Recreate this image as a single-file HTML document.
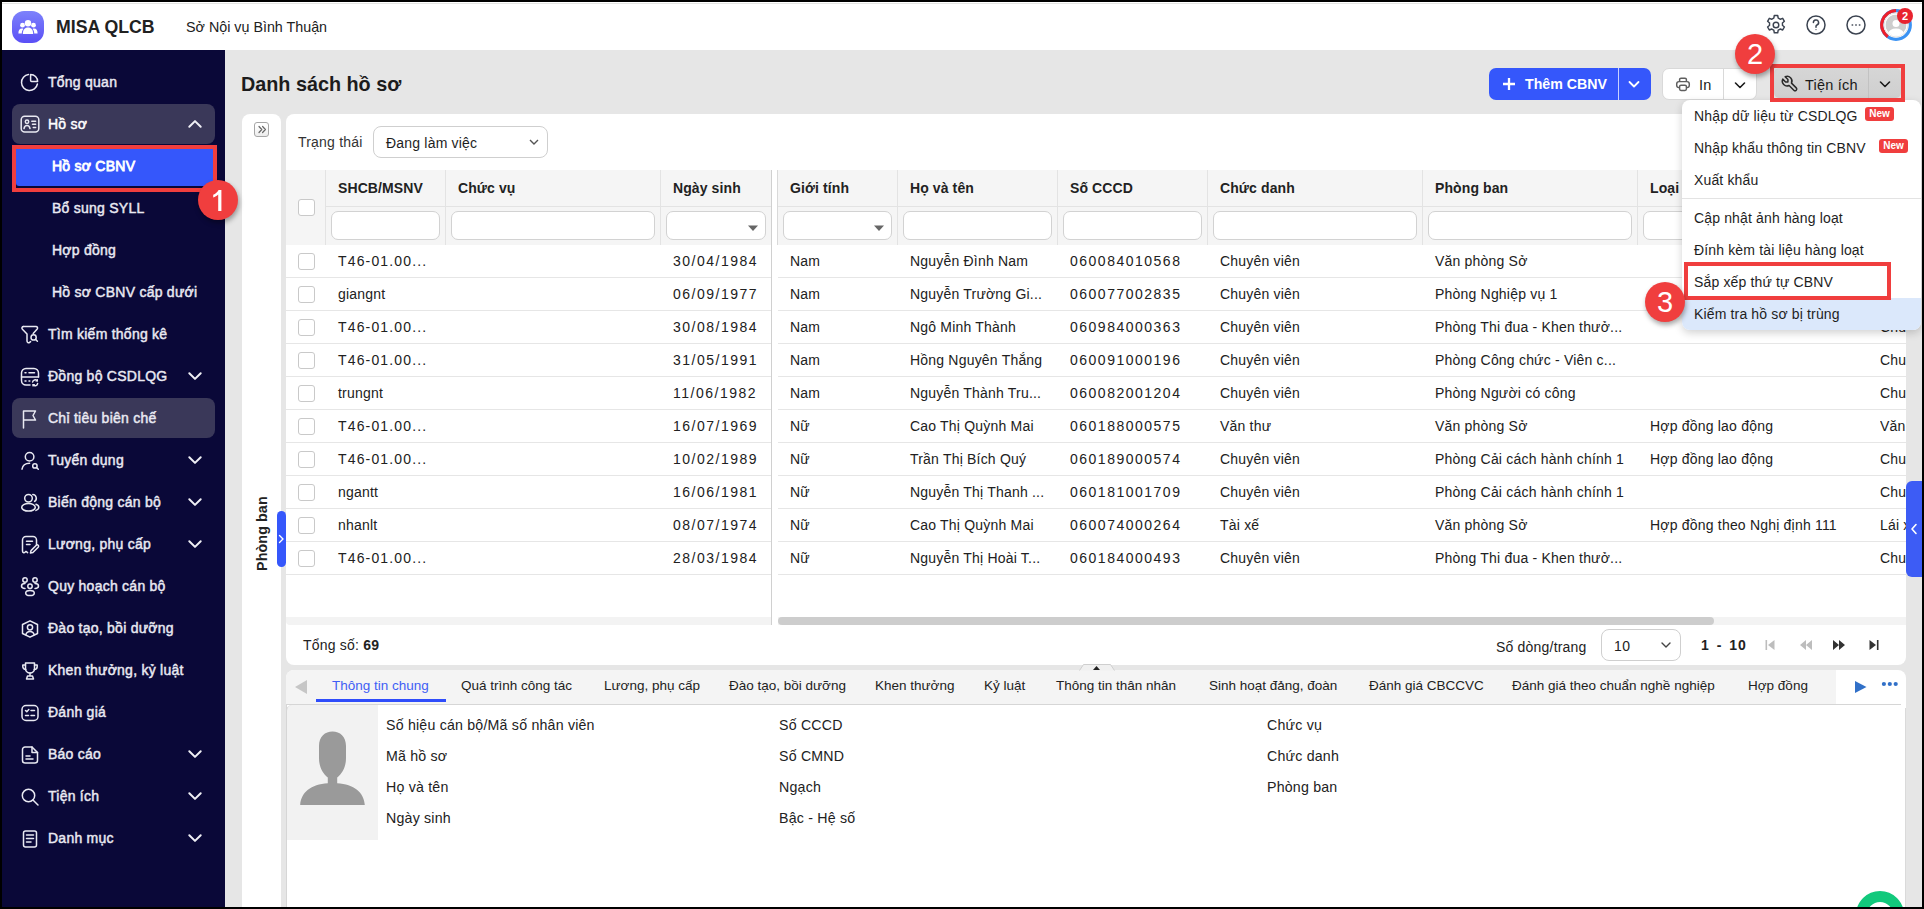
<!DOCTYPE html>
<html><head><meta charset="utf-8">
<style>
*{box-sizing:border-box}
html,body{margin:0;padding:0}
body{width:1924px;height:909px;position:relative;overflow:hidden;background:#e6e6e6;font-family:"Liberation Sans",sans-serif;font-size:14px;color:#212121}
.a{position:absolute}
.t{position:absolute;white-space:nowrap;line-height:16px;letter-spacing:0.2px}
.t.hd{letter-spacing:0.1px}
/* frame */
.bd{position:absolute;background:#000;z-index:100}
/* header */
#hdr{left:0;top:0;width:1924px;height:50px;background:#fff}
/* sidebar */
#sb{left:0;top:50px;width:225px;height:859px;background:#0a0838}
.si{position:absolute;left:48px;color:#ebebf3;font-weight:normal;-webkit-text-stroke:0.45px currentColor;letter-spacing:0.25px;font-size:14px;line-height:16px;white-space:nowrap}
.sub{left:52px}
.ic{position:absolute;left:20px;width:20px;height:20px}
.chev{position:absolute;left:186px;width:18px;height:18px}
/* panels */
.panel{position:absolute;background:#fff}
.cell{position:absolute;white-space:nowrap;line-height:16px}
.hd{font-weight:bold}
.inp{position:absolute;height:29px;top:211px;background:#fff;border:1px solid #d2d2d2;border-radius:7px}
.cb{position:absolute;left:298px;width:17px;height:17px;border:1px solid #c9c9c9;border-radius:3px;background:#fff}
.hl{position:absolute;height:1px;background:#e6e6e6}
.vl{position:absolute;width:1px;background:#e6e6e6}
.t.num{letter-spacing:1.5px}
.t.num2{letter-spacing:1.15px}
.red{position:absolute;border:4px solid #f03e3e;z-index:50}
.badge{position:absolute;width:40px;height:40px;border-radius:50%;background:#f03e3e;color:#fff;font-size:29px;line-height:40px;text-align:center;box-shadow:1px 3px 5px rgba(0,0,0,.35);z-index:60}
</style></head>
<body>
<!-- black frame -->
<div class="bd" style="left:0;top:0;width:1924px;height:2px"></div>
<div class="bd" style="left:0;top:907px;width:1924px;height:2px"></div>
<div class="bd" style="left:0;top:0;width:2px;height:909px"></div>
<div class="bd" style="left:1922px;top:0;width:2px;height:909px"></div>

<!-- HEADER -->
<div id="hdr" class="a"></div>
<div class="a" style="left:0;top:3px;width:1924px;height:1px;background:#e4e5e3"></div>


<!-- logo -->
<div class="a" style="left:12px;top:11px;width:32px;height:32px;border-radius:12px;background:linear-gradient(180deg,#7d82fb 0%,#5a4ff6 100%)"></div>
<svg class="a" style="left:12px;top:11px" width="32" height="32" viewBox="0 0 32 32">
 <g fill="#fff">
  <circle cx="16" cy="12.2" r="3.2"/>
  <circle cx="10.5" cy="14.2" r="2.4"/>
  <circle cx="21.5" cy="14.2" r="2.4"/>
  <path d="M10.8 23 C10.8 18.6 12.8 16.4 16 16.4 C19.2 16.4 21.2 18.6 21.2 23 Z"/>
  <path d="M6.4 22.4 C6.4 19.6 7.6 17.6 10 17.6 C10.6 17.6 11 17.7 11.3 17.9 C10.3 19 9.8 20.6 9.8 22.4 Z"/>
  <path d="M25.6 22.4 C25.6 19.6 24.4 17.6 22 17.6 C21.4 17.6 21 17.7 20.7 17.9 C21.7 19 22.2 20.6 22.2 22.4 Z"/>
 </g>
</svg>
<div class="t" style="left:56px;top:17px;font-size:17.7px;line-height:20px;font-weight:bold;color:#212121;letter-spacing:0">MISA QLCB</div>
<div class="t" style="left:186px;top:19px;font-size:14.3px;color:#212121;letter-spacing:0">Sở Nội vụ Bình Thuận</div>
<!-- gear -->
<svg class="a" style="left:1764px;top:13px" width="24" height="24" viewBox="0 0 24 24" fill="none" stroke="#3b4350" stroke-width="1.45" stroke-linejoin="round">
 <path d="M10.3 2.5h3.4l.5 2.6a7.5 7.5 0 0 1 2 1.15l2.5-.9 1.7 2.95-2 1.7a7.5 7.5 0 0 1 0 2.3l2 1.7-1.7 2.95-2.5-.9a7.5 7.5 0 0 1-2 1.15l-.5 2.6h-3.4l-.5-2.6a7.5 7.5 0 0 1-2-1.15l-2.5.9-1.7-2.95 2-1.7a7.5 7.5 0 0 1 0-2.3l-2-1.7 1.7-2.95 2.5.9a7.5 7.5 0 0 1 2-1.15z"/>
 <circle cx="12" cy="12" r="2.8"/>
</svg>
<!-- help -->
<svg class="a" style="left:1806px;top:15px" width="20" height="20" viewBox="0 0 20 20" fill="none" stroke="#3b4350" stroke-width="1.5">
 <circle cx="10" cy="10" r="9"/>
 <path d="M7.4 7.6a2.6 2.6 0 1 1 3.6 2.4c-.7.3-1 .8-1 1.5v.8" stroke-linecap="round"/>
 <circle cx="10" cy="14.6" r=".6" fill="#3b4350" stroke="none"/>
</svg>
<!-- more -->
<svg class="a" style="left:1846px;top:15px" width="20" height="20" viewBox="0 0 20 20" fill="none" stroke="#3b4350" stroke-width="1.5">
 <circle cx="10" cy="10" r="9"/>
 <g fill="#3b4350" stroke="none"><rect x="5.6" y="9.3" width="1.6" height="1.4"/><rect x="9.2" y="9.3" width="1.6" height="1.4"/><rect x="12.8" y="9.3" width="1.6" height="1.4"/></g>
</svg>
<!-- avatar -->
<svg class="a" style="left:1880px;top:9px" width="32" height="32" viewBox="0 0 32 32">
 <defs><clipPath id="avc"><circle cx="16" cy="16" r="10.6"/></clipPath></defs>
 <circle cx="16" cy="16" r="14.3" fill="none" stroke="#3a92f3" stroke-width="3.2"/>
 <path d="M16 1.7 A14.3 14.3 0 0 0 7.8 27.7" fill="none" stroke="#ee1f2b" stroke-width="3.2"/>
 <circle cx="16" cy="16" r="12" fill="#fff" stroke="#e4e4e4" stroke-width="1"/>
 <g clip-path="url(#avc)"><circle cx="16" cy="16" r="10.6" fill="#cdcdcd"/>
 <circle cx="16" cy="14.6" r="3.5" fill="#fff"/>
 <ellipse cx="16" cy="24.6" rx="7.6" ry="5" fill="#fff"/></g>
</svg>
<div class="a" style="left:1897px;top:8px;width:16px;height:16px;border-radius:50%;background:#e8232f;color:#fff;font-size:11px;font-weight:bold;line-height:16px;text-align:center">2</div>

<!-- SIDEBAR -->
<div id="sb" class="a"></div>
<div class="a" style="left:12px;top:104px;width:203px;height:40px;border-radius:8px;background:#3a3859"></div>
<div class="a" style="left:12px;top:398px;width:203px;height:40px;border-radius:8px;background:#3a3859"></div>
<div class="a" style="left:16px;top:149px;width:197px;height:37px;background:#3557fb;border-radius:0 0 0 3px"></div>
<div class="red" style="left:12px;top:145px;width:205px;height:47px"></div>
<svg class="a" style="left:19px;top:72px" width="22" height="22" viewBox="0 0 22 22" fill="none" stroke="#e9e9f2" stroke-width="1.5" stroke-linecap="round" stroke-linejoin="round"><path d="M9.5 2.6 A8 8 0 1 0 18.4 12"/><path d="M11.6 2.4 A7 7 0 0 1 18.6 9.4 H12.6 A1 1 0 0 1 11.6 8.4 Z"/></svg>
<div class="si" style="left:48px;top:74px;color:#e9e9f2">Tổng quan</div>
<svg class="a" style="left:19px;top:114px" width="22" height="22" viewBox="0 0 22 22" fill="none" stroke="#e9e9f2" stroke-width="1.5" stroke-linecap="round" stroke-linejoin="round"><rect x="2.2" y="2.2" width="17.6" height="15.8" rx="3.5"/><circle cx="8" cy="7.8" r="1.7"/><path d="M5 14.6 C5.4 12.4 6.6 11.5 8 11.5 C9.4 11.5 10.6 12.4 11 14.6"/><path d="M12.8 7.2 H16.6 M13.5 10.3 H16.6 M14.3 13.5 H16.6"/></svg>
<div class="si" style="left:48px;top:116px;color:#ffffff">Hồ sơ</div>
<svg class="a" style="left:186px;top:115px" width="18" height="18" viewBox="0 0 18 18" fill="none" stroke="#f0f0f6" stroke-width="2" stroke-linecap="round" stroke-linejoin="round"><path d="M3.3 11.8 L9 6.1 L14.7 11.8"/></svg>
<svg class="a" style="left:19px;top:324px" width="22" height="22" viewBox="0 0 22 22" fill="none" stroke="#e9e9f2" stroke-width="1.5" stroke-linecap="round" stroke-linejoin="round"><path d="M4.5 2.5 H17 C18.4 2.5 19 4 18.2 5 L14.2 9.5"/><path d="M4.5 2.5 C3 2.5 2.4 4.2 3.4 5.2 L8 10 V17 C8 18.5 9.5 19.3 10.6 18.4 L11.6 17.6"/><circle cx="14.6" cy="13.4" r="2.6"/><path d="M16.5 15.3 L18.4 17.2"/></svg>
<div class="si" style="left:48px;top:326px;color:#e9e9f2">Tìm kiếm thống kê</div>
<svg class="a" style="left:19px;top:366px" width="22" height="22" viewBox="0 0 22 22" fill="none" stroke="#e9e9f2" stroke-width="1.5" stroke-linecap="round" stroke-linejoin="round"><path d="M11 19 H7 A4.5 4.5 0 0 1 2.5 14.5 V7 A4.5 4.5 0 0 1 7 2.5 H15 A4.5 4.5 0 0 1 19.5 7 V11"/><path d="M2.5 11 H19.5"/><path d="M6 6.8 H7 M10 6.8 H15.5 M6 15 H7 M10 15 H10.8"/><path d="M13.6 16 A2.6 2.6 0 0 1 18.2 14.8 M18.6 17.6 A2.6 2.6 0 0 1 14 18.8"/><path d="M18.4 13.6 V15 H17 M14 20 V18.6 H15.4" stroke-width="1.2"/></svg>
<div class="si" style="left:48px;top:368px;color:#e9e9f2">Đồng bộ CSDLQG</div>
<svg class="a" style="left:186px;top:367px" width="18" height="18" viewBox="0 0 18 18" fill="none" stroke="#f0f0f6" stroke-width="2" stroke-linecap="round" stroke-linejoin="round"><path d="M3.3 6.2 L9 11.9 L14.7 6.2"/></svg>
<svg class="a" style="left:19px;top:408px" width="22" height="22" viewBox="0 0 22 22" fill="none" stroke="#e9e9f2" stroke-width="1.5" stroke-linecap="round" stroke-linejoin="round"><path d="M4.5 20 V3 H16.5 L14 7.5 L16.5 12 H4.5"/></svg>
<div class="si" style="left:48px;top:410px;color:#e9e9f2">Chỉ tiêu biên chế</div>
<svg class="a" style="left:19px;top:450px" width="22" height="22" viewBox="0 0 22 22" fill="none" stroke="#e9e9f2" stroke-width="1.5" stroke-linecap="round" stroke-linejoin="round"><circle cx="10.6" cy="6.8" r="4.3"/><path d="M3 19.2 C3.6 15.2 6.6 13.2 10.6 13.2"/><circle cx="15.9" cy="15.9" r="2.2"/><path d="M17.5 17.5 L19.3 19.3"/></svg>
<div class="si" style="left:48px;top:452px;color:#e9e9f2">Tuyển dụng</div>
<svg class="a" style="left:186px;top:451px" width="18" height="18" viewBox="0 0 18 18" fill="none" stroke="#f0f0f6" stroke-width="2" stroke-linecap="round" stroke-linejoin="round"><path d="M3.3 6.2 L9 11.9 L14.7 6.2"/></svg>
<svg class="a" style="left:19px;top:492px" width="22" height="22" viewBox="0 0 22 22" fill="none" stroke="#e9e9f2" stroke-width="1.5" stroke-linecap="round" stroke-linejoin="round"><circle cx="9.5" cy="6.3" r="3.8"/><ellipse cx="9.5" cy="15.3" rx="6.8" ry="3.8"/><path d="M13.8 2.6 A3.7 3.7 0 0 1 15.6 9.4"/><path d="M17 12.2 C18.8 12.8 19.8 14 19.8 15.3 C19.8 16.7 18.8 17.8 17 18.4"/></svg>
<div class="si" style="left:48px;top:494px;color:#e9e9f2">Biến động cán bộ</div>
<svg class="a" style="left:186px;top:493px" width="18" height="18" viewBox="0 0 18 18" fill="none" stroke="#f0f0f6" stroke-width="2" stroke-linecap="round" stroke-linejoin="round"><path d="M3.3 6.2 L9 11.9 L14.7 6.2"/></svg>
<svg class="a" style="left:19px;top:534px" width="22" height="22" viewBox="0 0 22 22" fill="none" stroke="#e9e9f2" stroke-width="1.5" stroke-linecap="round" stroke-linejoin="round"><path d="M17.5 11 V6 A3.5 3.5 0 0 0 14 2.5 H7 A3.5 3.5 0 0 0 3.5 6 V17 C3.5 18.6 5 19.3 6 18.3 L7 17.4 L8.6 18.6"/><path d="M7.5 7.2 H13.5 M7.5 10.5 H11"/><path d="M11.5 19 L12 16.6 L17.3 11.3 A1.1 1.1 0 0 1 19.2 13.2 L13.9 18.5 Z"/></svg>
<div class="si" style="left:48px;top:536px;color:#e9e9f2">Lương, phụ cấp</div>
<svg class="a" style="left:186px;top:535px" width="18" height="18" viewBox="0 0 18 18" fill="none" stroke="#f0f0f6" stroke-width="2" stroke-linecap="round" stroke-linejoin="round"><path d="M3.3 6.2 L9 11.9 L14.7 6.2"/></svg>
<svg class="a" style="left:19px;top:576px" width="22" height="22" viewBox="0 0 22 22" fill="none" stroke="#e9e9f2" stroke-width="1.5" stroke-linecap="round" stroke-linejoin="round"><circle cx="6" cy="4" r="2.2"/><circle cx="16" cy="4" r="2.2"/><circle cx="11" cy="10.2" r="2.2"/><path d="M6 7.6 C3.6 7.6 2.5 8.8 2.5 10 C2.5 11.2 3.6 12.4 6 12.4 M16 7.6 C18.4 7.6 19.5 8.8 19.5 10 C19.5 11.2 18.4 12.4 16 12.4"/><ellipse cx="11" cy="17" rx="4.3" ry="2.6"/></svg>
<div class="si" style="left:48px;top:578px;color:#e9e9f2">Quy hoạch cán bộ</div>
<svg class="a" style="left:19px;top:618px" width="22" height="22" viewBox="0 0 22 22" fill="none" stroke="#e9e9f2" stroke-width="1.5" stroke-linecap="round" stroke-linejoin="round"><path d="M11 2.8 L18.5 6.5 V15.5 L11 19.2 L3.5 15.5 V6.5 Z"/><circle cx="11" cy="9.3" r="2.6"/><path d="M6.8 16.8 C7.4 14.3 9 13.4 11 13.4 C13 13.4 14.6 14.3 15.2 16.8"/></svg>
<div class="si" style="left:48px;top:620px;color:#e9e9f2">Đào tạo, bồi dưỡng</div>
<svg class="a" style="left:19px;top:660px" width="22" height="22" viewBox="0 0 22 22" fill="none" stroke="#e9e9f2" stroke-width="1.5" stroke-linecap="round" stroke-linejoin="round"><path d="M6.5 3 H15.5 V8.5 A4.5 4.5 0 0 1 6.5 8.5 Z"/><path d="M6.5 5 H3.8 V6.5 A3 3 0 0 0 6.8 9.5 M15.5 5 H18.2 V6.5 A3 3 0 0 1 15.2 9.5"/><path d="M11 13 V16 M7.5 19 H14.5 L13.5 16 H8.5 Z"/></svg>
<div class="si" style="left:48px;top:662px;color:#e9e9f2">Khen thưởng, kỷ luật</div>
<svg class="a" style="left:19px;top:702px" width="22" height="22" viewBox="0 0 22 22" fill="none" stroke="#e9e9f2" stroke-width="1.5" stroke-linecap="round" stroke-linejoin="round"><rect x="3" y="3.5" width="16" height="15" rx="4"/><path d="M6.5 8.5 L7.8 9.8 L9.8 7.5 M12 8.5 H15.5 M6.5 13.5 H9.5 M12 13.5 H15.5"/></svg>
<div class="si" style="left:48px;top:704px;color:#e9e9f2">Đánh giá</div>
<svg class="a" style="left:19px;top:744px" width="22" height="22" viewBox="0 0 22 22" fill="none" stroke="#e9e9f2" stroke-width="1.5" stroke-linecap="round" stroke-linejoin="round"><path d="M13 3 H6 A2.5 2.5 0 0 0 3.5 5.5 V16.5 A2.5 2.5 0 0 0 6 19 H16 A2.5 2.5 0 0 0 18.5 16.5 V8.5 Z"/><path d="M13 3 V8.5 H18.5"/><path d="M7 12 H11 M7 15 H14"/></svg>
<div class="si" style="left:48px;top:746px;color:#e9e9f2">Báo cáo</div>
<svg class="a" style="left:186px;top:745px" width="18" height="18" viewBox="0 0 18 18" fill="none" stroke="#f0f0f6" stroke-width="2" stroke-linecap="round" stroke-linejoin="round"><path d="M3.3 6.2 L9 11.9 L14.7 6.2"/></svg>
<svg class="a" style="left:19px;top:786px" width="22" height="22" viewBox="0 0 22 22" fill="none" stroke="#e9e9f2" stroke-width="1.5" stroke-linecap="round" stroke-linejoin="round"><circle cx="9.5" cy="9.5" r="6.2"/><path d="M14 14 L19 19"/></svg>
<div class="si" style="left:48px;top:788px;color:#e9e9f2">Tiện ích</div>
<svg class="a" style="left:186px;top:787px" width="18" height="18" viewBox="0 0 18 18" fill="none" stroke="#f0f0f6" stroke-width="2" stroke-linecap="round" stroke-linejoin="round"><path d="M3.3 6.2 L9 11.9 L14.7 6.2"/></svg>
<svg class="a" style="left:19px;top:828px" width="22" height="22" viewBox="0 0 22 22" fill="none" stroke="#e9e9f2" stroke-width="1.5" stroke-linecap="round" stroke-linejoin="round"><rect x="4.5" y="3" width="13" height="16" rx="2"/><path d="M7.5 7 H14.5 M7.5 10.5 H14.5 M7.5 14 H12"/></svg>
<div class="si" style="left:48px;top:830px;color:#e9e9f2">Danh mục</div>
<svg class="a" style="left:186px;top:829px" width="18" height="18" viewBox="0 0 18 18" fill="none" stroke="#f0f0f6" stroke-width="2" stroke-linecap="round" stroke-linejoin="round"><path d="M3.3 6.2 L9 11.9 L14.7 6.2"/></svg>
<div class="si" style="left:52px;top:158px;color:#ffffff;-webkit-text-stroke:0.8px #fff">Hồ sơ CBNV</div>
<div class="si" style="left:52px;top:200px;color:#e9e9f2">Bổ sung SYLL</div>
<div class="si" style="left:52px;top:242px;color:#e9e9f2">Hợp đồng</div>
<div class="si" style="left:52px;top:284px;color:#e9e9f2">Hồ sơ CBNV cấp dưới</div>
<div class="badge" style="left:198px;top:180px"><svg style="position:absolute;left:0;top:0" width="40" height="40" viewBox="0 0 40 40"><path d="M20.6 10 H23.4 V31 H20.2 V14.6 C18.8 15.9 17 16.9 15.2 17.5 V14.7 C17.6 13.8 19.5 12.2 20.6 10 Z" fill="#fff"/></svg></div>


<!-- TITLE -->
<div class="t" style="left:241px;top:73px;font-size:19.8px;line-height:22px;font-weight:bold;color:#1c1c1c;letter-spacing:0">Danh sách hồ sơ</div>
<!-- Them CBNV -->
<div class="a" style="left:1489px;top:68px;width:162px;height:32px;border-radius:7px;background:#3557fb"></div>
<div class="a" style="left:1618px;top:68px;width:1px;height:32px;background:#c9d2ff"></div>
<svg class="a" style="left:1502px;top:77px" width="14" height="14" viewBox="0 0 14 14" stroke="#fff" stroke-width="2.3"><path d="M7 1 V13 M1 7 H13"/></svg>
<div class="t" style="left:1525px;top:76px;font-size:14.2px;font-weight:bold;color:#fff;letter-spacing:0">Thêm CBNV</div>
<svg class="a" style="left:1626px;top:76px" width="16" height="16" viewBox="0 0 16 16" fill="none" stroke="#fff" stroke-width="1.8" stroke-linecap="round" stroke-linejoin="round"><path d="M3.5 6 L8 10.5 L12.5 6"/></svg>
<!-- In -->
<div class="a" style="left:1662px;top:68px;width:95px;height:32px;border-radius:7px;background:#fff;border:1px solid #d9d9d9"></div>
<div class="a" style="left:1723px;top:69px;width:1px;height:30px;background:#d9d9d9"></div>
<svg class="a" style="left:1675px;top:76px" width="16" height="16" viewBox="0 0 16 16" fill="none" stroke="#5e5e5e" stroke-width="1.45" stroke-linejoin="round"><path d="M4.6 5.6 V3.6 A1.4 1.4 0 0 1 6 2.2 H10 A1.4 1.4 0 0 1 11.4 3.6 V5.6"/><rect x="1.7" y="5.6" width="12.6" height="6" rx="2.3"/><rect x="4.6" y="9.2" width="6.8" height="5.2" rx="1.4" fill="#fff"/></svg>
<div class="t" style="left:1699px;top:77px;font-size:14.5px;color:#1a1a1a">In</div>
<svg class="a" style="left:1732px;top:77px" width="16" height="16" viewBox="0 0 16 16" fill="none" stroke="#1a1a1a" stroke-width="1.6" stroke-linecap="round" stroke-linejoin="round"><path d="M3.5 6 L8 10.5 L12.5 6"/></svg>
<!-- Tien ich -->
<div class="a" style="left:1774px;top:68px;width:127px;height:30px;border-radius:5px;background:linear-gradient(180deg,#d6d6d6,#cfcfcf)"></div>
<div class="a" style="left:1868px;top:68px;width:1px;height:30px;background:#c2c2c2"></div>
<svg class="a" style="left:1780px;top:74px" width="19" height="19" viewBox="0 0 24 24" fill="none" stroke="#2a2a2a" stroke-width="1.9" stroke-linecap="round" stroke-linejoin="round"><path d="M7 10h3v-3l-3.5 -3.5a6 6 0 0 1 8 8l6 6a2 2 0 0 1 -3 3l-6 -6a6 6 0 0 1 -8 -8l3.5 3.5"/></svg>
<div class="t" style="left:1805px;top:77px;font-size:14.5px;color:#1a1a1a">Tiện ích</div>
<svg class="a" style="left:1877px;top:76px" width="16" height="16" viewBox="0 0 16 16" fill="none" stroke="#1a1a1a" stroke-width="1.6" stroke-linecap="round" stroke-linejoin="round"><path d="M3.5 6 L8 10.5 L12.5 6"/></svg>
<div class="red" style="left:1770px;top:64px;width:135px;height:38px"></div>
<div class="badge" style="left:1735px;top:34px">2</div>

<!-- LEFT COLLAPSED PANEL -->
<div class="panel" style="left:242px;top:114px;width:39px;height:800px;border-radius:8px 8px 0 0"></div>

<!-- MAIN PANEL -->
<div class="panel" style="left:286px;top:114px;width:1620px;height:551px;border-radius:8px"></div>

<div class="t" style="left:298px;top:134px;color:#333">Trạng thái</div>
<div class="a" style="left:373px;top:126px;width:175px;height:32px;border:1px solid #cfcfcf;border-radius:8px;background:#fff"></div>
<div class="t" style="left:386px;top:135px;color:#1e1e1e">Đang làm việc</div>
<svg class="a" style="left:527px;top:135px" width="14" height="14" viewBox="0 0 14 14" fill="none" stroke="#555" stroke-width="1.4" stroke-linecap="butt" stroke-linejoin="miter"><path d="M3 5 L7 9 L11 5"/></svg>
<div class="a" style="left:286px;top:170px;width:485px;height:75px;background:#f5f5f5"></div>
<div class="a" style="left:778px;top:170px;width:1128px;height:75px;background:#f5f5f5"></div>
<div class="hl" style="left:325px;top:206px;width:446px;background:#e3e3e3"></div>
<div class="hl" style="left:778px;top:206px;width:1128px;background:#e3e3e3"></div>
<div class="vl" style="left:325px;top:170px;height:75px;background:#e3e3e3"></div>
<div class="vl" style="left:445px;top:170px;height:75px;background:#e3e3e3"></div>
<div class="vl" style="left:660px;top:170px;height:75px;background:#e3e3e3"></div>
<div class="vl" style="left:897px;top:170px;height:75px;background:#e3e3e3"></div>
<div class="vl" style="left:1057px;top:170px;height:75px;background:#e3e3e3"></div>
<div class="vl" style="left:1207px;top:170px;height:75px;background:#e3e3e3"></div>
<div class="vl" style="left:1422px;top:170px;height:75px;background:#e3e3e3"></div>
<div class="vl" style="left:1637px;top:170px;height:75px;background:#e3e3e3"></div>
<div class="vl" style="left:1867px;top:170px;height:75px;background:#e3e3e3"></div>
<div class="a" style="left:771px;top:170px;width:1px;height:455px;background:#d0d0d0"></div>
<div class="a" style="left:777px;top:170px;width:1px;height:75px;background:#d9d9d9"></div>
<div class="t hd" style="left:338px;top:180px;color:#222">SHCB/MSNV</div>
<div class="t hd" style="left:458px;top:180px;color:#222">Chức vụ</div>
<div class="t hd" style="left:673px;top:180px;color:#222">Ngày sinh</div>
<div class="t hd" style="left:790px;top:180px;color:#222">Giới tính</div>
<div class="t hd" style="left:910px;top:180px;color:#222">Họ và tên</div>
<div class="t hd" style="left:1070px;top:180px;color:#222">Số CCCD</div>
<div class="t hd" style="left:1220px;top:180px;color:#222">Chức danh</div>
<div class="t hd" style="left:1435px;top:180px;color:#222">Phòng ban</div>
<div class="t hd" style="left:1650px;top:180px;color:#222">Loại</div>
<div class="cb" style="top:199px"></div>
<div class="inp" style="left:331px;width:109px"></div>
<div class="inp" style="left:451px;width:204px"></div>
<div class="inp" style="left:666px;width:100px"></div>
<div class="inp" style="left:783px;width:109px"></div>
<div class="inp" style="left:903px;width:149px"></div>
<div class="inp" style="left:1063px;width:139px"></div>
<div class="inp" style="left:1213px;width:204px"></div>
<div class="inp" style="left:1428px;width:204px"></div>
<div class="inp" style="left:1643px;width:219px"></div>
<svg class="a" style="left:747px;top:224px" width="12" height="8" viewBox="0 0 12 8"><path d="M1 1.5 H11 L6 7 Z" fill="#666"/></svg>
<svg class="a" style="left:873px;top:224px" width="12" height="8" viewBox="0 0 12 8"><path d="M1 1.5 H11 L6 7 Z" fill="#666"/></svg>
<div class="cb" style="top:253px"></div>
<div class="t num2" style="left:338px;top:253px">T46-01.00...</div>
<div class="t num" style="left:673px;top:253px">30/04/1984</div>
<div class="t" style="left:790px;top:253px">Nam</div>
<div class="t" style="left:910px;top:253px">Nguyễn Đình Nam</div>
<div class="t num" style="left:1070px;top:253px">060084010568</div>
<div class="t" style="left:1220px;top:253px">Chuyên viên</div>
<div class="t" style="left:1435px;top:253px">Văn phòng Sở</div>
<div class="t" style="left:1880px;top:253px;width:26px;overflow:hidden">Chu</div>
<div class="hl" style="left:286px;top:277px;width:485px"></div>
<div class="hl" style="left:778px;top:277px;width:1128px"></div>
<div class="cb" style="top:286px"></div>
<div class="t " style="left:338px;top:286px">giangnt</div>
<div class="t num" style="left:673px;top:286px">06/09/1977</div>
<div class="t" style="left:790px;top:286px">Nam</div>
<div class="t" style="left:910px;top:286px">Nguyễn Trường Gi...</div>
<div class="t num" style="left:1070px;top:286px">060077002835</div>
<div class="t" style="left:1220px;top:286px">Chuyên viên</div>
<div class="t" style="left:1435px;top:286px">Phòng Nghiệp vụ 1</div>
<div class="t" style="left:1880px;top:286px;width:26px;overflow:hidden">Chu</div>
<div class="hl" style="left:286px;top:310px;width:485px"></div>
<div class="hl" style="left:778px;top:310px;width:1128px"></div>
<div class="cb" style="top:319px"></div>
<div class="t num2" style="left:338px;top:319px">T46-01.00...</div>
<div class="t num" style="left:673px;top:319px">30/08/1984</div>
<div class="t" style="left:790px;top:319px">Nam</div>
<div class="t" style="left:910px;top:319px">Ngô Minh Thành</div>
<div class="t num" style="left:1070px;top:319px">060984000363</div>
<div class="t" style="left:1220px;top:319px">Chuyên viên</div>
<div class="t" style="left:1435px;top:319px">Phòng Thi đua - Khen thưở...</div>
<div class="t" style="left:1880px;top:319px;width:26px;overflow:hidden">Chu</div>
<div class="hl" style="left:286px;top:343px;width:485px"></div>
<div class="hl" style="left:778px;top:343px;width:1128px"></div>
<div class="cb" style="top:352px"></div>
<div class="t num2" style="left:338px;top:352px">T46-01.00...</div>
<div class="t num" style="left:673px;top:352px">31/05/1991</div>
<div class="t" style="left:790px;top:352px">Nam</div>
<div class="t" style="left:910px;top:352px">Hồng Nguyên Thắng</div>
<div class="t num" style="left:1070px;top:352px">060091000196</div>
<div class="t" style="left:1220px;top:352px">Chuyên viên</div>
<div class="t" style="left:1435px;top:352px">Phòng Công chức - Viên c...</div>
<div class="t" style="left:1880px;top:352px;width:26px;overflow:hidden">Chu</div>
<div class="hl" style="left:286px;top:376px;width:485px"></div>
<div class="hl" style="left:778px;top:376px;width:1128px"></div>
<div class="cb" style="top:385px"></div>
<div class="t " style="left:338px;top:385px">trungnt</div>
<div class="t num" style="left:673px;top:385px">11/06/1982</div>
<div class="t" style="left:790px;top:385px">Nam</div>
<div class="t" style="left:910px;top:385px">Nguyễn Thành Tru...</div>
<div class="t num" style="left:1070px;top:385px">060082001204</div>
<div class="t" style="left:1220px;top:385px">Chuyên viên</div>
<div class="t" style="left:1435px;top:385px">Phòng Người có công</div>
<div class="t" style="left:1880px;top:385px;width:26px;overflow:hidden">Chu</div>
<div class="hl" style="left:286px;top:409px;width:485px"></div>
<div class="hl" style="left:778px;top:409px;width:1128px"></div>
<div class="cb" style="top:418px"></div>
<div class="t num2" style="left:338px;top:418px">T46-01.00...</div>
<div class="t num" style="left:673px;top:418px">16/07/1969</div>
<div class="t" style="left:790px;top:418px">Nữ</div>
<div class="t" style="left:910px;top:418px">Cao Thị Quỳnh Mai</div>
<div class="t num" style="left:1070px;top:418px">060188000575</div>
<div class="t" style="left:1220px;top:418px">Văn thư</div>
<div class="t" style="left:1435px;top:418px">Văn phòng Sở</div>
<div class="t" style="left:1650px;top:418px">Hợp đồng lao động</div>
<div class="t" style="left:1880px;top:418px;width:26px;overflow:hidden">Văn</div>
<div class="hl" style="left:286px;top:442px;width:485px"></div>
<div class="hl" style="left:778px;top:442px;width:1128px"></div>
<div class="cb" style="top:451px"></div>
<div class="t num2" style="left:338px;top:451px">T46-01.00...</div>
<div class="t num" style="left:673px;top:451px">10/02/1989</div>
<div class="t" style="left:790px;top:451px">Nữ</div>
<div class="t" style="left:910px;top:451px">Trần Thị Bích Quý</div>
<div class="t num" style="left:1070px;top:451px">060189000574</div>
<div class="t" style="left:1220px;top:451px">Chuyên viên</div>
<div class="t" style="left:1435px;top:451px">Phòng Cải cách hành chính 1</div>
<div class="t" style="left:1650px;top:451px">Hợp đồng lao động</div>
<div class="t" style="left:1880px;top:451px;width:26px;overflow:hidden">Chu</div>
<div class="hl" style="left:286px;top:475px;width:485px"></div>
<div class="hl" style="left:778px;top:475px;width:1128px"></div>
<div class="cb" style="top:484px"></div>
<div class="t " style="left:338px;top:484px">ngantt</div>
<div class="t num" style="left:673px;top:484px">16/06/1981</div>
<div class="t" style="left:790px;top:484px">Nữ</div>
<div class="t" style="left:910px;top:484px">Nguyễn Thị Thanh ...</div>
<div class="t num" style="left:1070px;top:484px">060181001709</div>
<div class="t" style="left:1220px;top:484px">Chuyên viên</div>
<div class="t" style="left:1435px;top:484px">Phòng Cải cách hành chính 1</div>
<div class="t" style="left:1880px;top:484px;width:26px;overflow:hidden">Chu</div>
<div class="hl" style="left:286px;top:508px;width:485px"></div>
<div class="hl" style="left:778px;top:508px;width:1128px"></div>
<div class="cb" style="top:517px"></div>
<div class="t " style="left:338px;top:517px">nhanlt</div>
<div class="t num" style="left:673px;top:517px">08/07/1974</div>
<div class="t" style="left:790px;top:517px">Nữ</div>
<div class="t" style="left:910px;top:517px">Cao Thị Quỳnh Mai</div>
<div class="t num" style="left:1070px;top:517px">060074000264</div>
<div class="t" style="left:1220px;top:517px">Tài xế</div>
<div class="t" style="left:1435px;top:517px">Văn phòng Sở</div>
<div class="t" style="left:1650px;top:517px">Hợp đồng theo Nghị định 111</div>
<div class="t" style="left:1880px;top:517px;width:26px;overflow:hidden">Lái x</div>
<div class="hl" style="left:286px;top:541px;width:485px"></div>
<div class="hl" style="left:778px;top:541px;width:1128px"></div>
<div class="cb" style="top:550px"></div>
<div class="t num2" style="left:338px;top:550px">T46-01.00...</div>
<div class="t num" style="left:673px;top:550px">28/03/1984</div>
<div class="t" style="left:790px;top:550px">Nữ</div>
<div class="t" style="left:910px;top:550px">Nguyễn Thị Hoài T...</div>
<div class="t num" style="left:1070px;top:550px">060184000493</div>
<div class="t" style="left:1220px;top:550px">Chuyên viên</div>
<div class="t" style="left:1435px;top:550px">Phòng Thi đua - Khen thưở...</div>
<div class="t" style="left:1880px;top:550px;width:26px;overflow:hidden">Chu</div>
<div class="hl" style="left:286px;top:574px;width:485px"></div>
<div class="hl" style="left:778px;top:574px;width:1128px"></div>
<div class="a" style="left:286px;top:617px;width:485px;height:8px;background:#f3f3f3;border-radius:0 0 0 4px"></div>
<div class="a" style="left:778px;top:617px;width:1128px;height:8px;background:#f3f3f3"></div>
<div class="a" style="left:778px;top:617px;width:936px;height:8px;background:#cdcdcd;border-radius:4px"></div>
<div class="t" style="left:303px;top:637px;color:#222">Tổng số: <b>69</b></div>
<div class="t" style="left:1496px;top:639px;color:#222">Số dòng/trang</div>
<div class="a" style="left:1601px;top:629px;width:80px;height:32px;border:1px solid #cfcfcf;border-radius:8px;background:#fff"></div>
<div class="t" style="left:1614px;top:638px;color:#222;letter-spacing:.5px">10</div>
<svg class="a" style="left:1659px;top:638px" width="14" height="14" viewBox="0 0 14 14" fill="none" stroke="#444" stroke-width="1.4" stroke-linecap="round" stroke-linejoin="round"><path d="M3 5 L7 9 L11 5"/></svg>
<div class="t" style="left:1701px;top:637px;color:#222;font-weight:bold;letter-spacing:1px;word-spacing:2px">1 - 10</div>
<svg class="a" style="left:1763px;top:638px" width="14" height="14" viewBox="0 0 14 14"><rect x="2.5" y="2" width="1.6" height="10" fill="#bdbdbd"/><path d="M11.5 2 L5 7 L11.5 12 Z" fill="#bdbdbd"/></svg>
<svg class="a" style="left:1799px;top:638px" width="14" height="14" viewBox="0 0 14 14"><path d="M7 2 L1 7 L7 12 Z M13 2 L7 7 L13 12 Z" fill="#bdbdbd"/></svg>
<svg class="a" style="left:1832px;top:638px" width="14" height="14" viewBox="0 0 14 14"><path d="M1 2 L7 7 L1 12 Z M7 2 L13 7 L7 12 Z" fill="#333"/></svg>
<svg class="a" style="left:1867px;top:638px" width="14" height="14" viewBox="0 0 14 14"><path d="M2.5 2 L9 7 L2.5 12 Z" fill="#333"/><rect x="9.9" y="2" width="1.6" height="10" fill="#333"/></svg>
<!-- BOTTOM PANEL -->
<div class="panel" style="left:286px;top:670px;width:1620px;height:240px;border-radius:8px 8px 0 0"></div>

<div class="a" style="left:254px;top:122px;width:15px;height:15px;border:1px solid #a6a6a6;border-radius:3px;background:linear-gradient(180deg,#fff 20%,#ececec 100%)"></div>
<svg class="a" style="left:255px;top:122px" width="15" height="15" viewBox="0 0 15 15" fill="none" stroke="#666" stroke-width="1.2" stroke-linecap="round" stroke-linejoin="round"><path d="M4 4.5 L6.8 7.5 L4 10.5 M7.6 4.5 L10.4 7.5 L7.6 10.5"/></svg>
<div class="t hd" style="left:226px;top:527px;width:72px;text-align:center;transform:rotate(-90deg);color:#222;font-size:14.3px">Phòng ban</div>
<div class="a" style="left:277px;top:511px;width:9px;height:56px;border-radius:5px;background:#3557fb"></div>
<svg class="a" style="left:277px;top:532px" width="9" height="14" viewBox="0 0 9 14" fill="none" stroke="#fff" stroke-width="1.4" stroke-linecap="round" stroke-linejoin="round"><path d="M2.5 3.5 L6 7 L2.5 10.5"/></svg>
<div class="a" style="left:1906px;top:481px;width:20px;height:96px;border-radius:6px 0 0 6px;background:#3d5cf5"></div>
<svg class="a" style="left:1906px;top:521px" width="16" height="16" viewBox="0 0 16 16" fill="none" stroke="#fff" stroke-width="1.6" stroke-linecap="round" stroke-linejoin="round"><path d="M10 3.5 L6 8 L10 12.5"/></svg>
<div class="a" style="left:1682px;top:100px;width:239px;height:230px;background:#fff;border-radius:8px;box-shadow:0 3px 8px rgba(0,0,0,.18);z-index:40"></div>
<div class="a" style="left:1682px;top:298px;width:239px;height:32px;background:#dbe8fb;border-radius:0 0 8px 8px;z-index:41"></div>
<div class="a" style="left:1682px;top:198px;width:239px;height:1px;background:#e3e3e3;z-index:41"></div>
<div class="t" style="left:1694px;top:108px;color:#1e1e1e;z-index:42;letter-spacing:0.15px">Nhập dữ liệu từ CSDLQG</div>
<div class="t" style="left:1694px;top:140px;color:#1e1e1e;z-index:42;letter-spacing:0.15px">Nhập khẩu thông tin CBNV</div>
<div class="t" style="left:1694px;top:172px;color:#1e1e1e;z-index:42;letter-spacing:0.15px">Xuất khẩu</div>
<div class="t" style="left:1694px;top:210px;color:#1e1e1e;z-index:42;letter-spacing:0.15px">Cập nhật ảnh hàng loạt</div>
<div class="t" style="left:1694px;top:242px;color:#1e1e1e;z-index:42;letter-spacing:0.15px">Đính kèm tài liệu hàng loạt</div>
<div class="t" style="left:1694px;top:274px;color:#1e1e1e;z-index:42;letter-spacing:0.15px">Sắp xếp thứ tự CBNV</div>
<div class="t" style="left:1694px;top:306px;color:#1e1e1e;z-index:42;letter-spacing:0.15px">Kiểm tra hồ sơ bị trùng</div>
<div class="a" style="left:1865px;top:107px;width:29px;height:14px;border-radius:3px;background:#f03e3e;color:#fff;font-size:10px;font-weight:bold;line-height:14px;text-align:center;z-index:42">New</div>
<div class="a" style="left:1879px;top:139px;width:29px;height:14px;border-radius:3px;background:#f03e3e;color:#fff;font-size:10px;font-weight:bold;line-height:14px;text-align:center;z-index:42">New</div>
<div class="red" style="left:1684px;top:262px;width:207px;height:38px"></div>
<div class="badge" style="left:1645px;top:282px">3</div>
<div class="a" style="left:286px;top:670px;width:1550px;height:35px;background:#f4f4f4;border-radius:8px 0 0 0"></div>
<div class="a" style="left:286px;top:704px;width:1615px;height:1px;background:#d6d6d6"></div>
<svg class="a" style="left:1079px;top:664px" width="36" height="7" viewBox="0 0 36 7"><path d="M0.5 6.5 L4.5 0.5 H31.5 L35.5 6.5" fill="#f0f0f0" stroke="#cfcfcf" stroke-width="1"/><path d="M14 6 L17.5 2 L21 6 Z" fill="#222"/></svg>
<svg class="a" style="left:294px;top:679px" width="14" height="16" viewBox="0 0 14 16"><path d="M13 1 L13 15 L1 8 Z" fill="#c6c6c6"/></svg>
<div class="t" style="left:332px;top:678px;color:#3f5ef5;font-size:13.5px;letter-spacing:0">Thông tin chung</div>
<div class="t" style="left:461px;top:678px;color:#222;font-size:13.5px;letter-spacing:0">Quá trình công tác</div>
<div class="t" style="left:604px;top:678px;color:#222;font-size:13.5px;letter-spacing:0">Lương, phụ cấp</div>
<div class="t" style="left:729px;top:678px;color:#222;font-size:13.5px;letter-spacing:0">Đào tạo, bồi dưỡng</div>
<div class="t" style="left:875px;top:678px;color:#222;font-size:13.5px;letter-spacing:0">Khen thưởng</div>
<div class="t" style="left:984px;top:678px;color:#222;font-size:13.5px;letter-spacing:0">Kỷ luật</div>
<div class="t" style="left:1056px;top:678px;color:#222;font-size:13.5px;letter-spacing:0">Thông tin thân nhân</div>
<div class="t" style="left:1209px;top:678px;color:#222;font-size:13.5px;letter-spacing:0">Sinh hoạt đảng, đoàn</div>
<div class="t" style="left:1369px;top:678px;color:#222;font-size:13.5px;letter-spacing:0">Đánh giá CBCCVC</div>
<div class="t" style="left:1512px;top:678px;color:#222;font-size:13.5px;letter-spacing:0">Đánh giá theo chuẩn nghề nghiệp</div>
<div class="t" style="left:1748px;top:678px;color:#222;font-size:13.5px;letter-spacing:0">Hợp đồng</div>
<div class="a" style="left:316px;top:699px;width:130px;height:3px;background:#2f4dfb"></div>
<svg class="a" style="left:1853px;top:680px" width="14" height="14" viewBox="0 0 14 14"><path d="M2 1 L2 13 L13.5 7 Z" fill="#3170c8"/></svg>
<svg class="a" style="left:1880px;top:680px" width="20" height="8" viewBox="0 0 20 8" fill="#3170c8"><circle cx="3.9" cy="4" r="2.1"/><circle cx="9.8" cy="4" r="2.1"/><circle cx="15.7" cy="4" r="2.1"/></svg>
<div class="a" style="left:1905px;top:708px;width:1px;height:200px;background:#dadada"></div>
<div class="a" style="left:286px;top:705px;width:1px;height:203px;background:#d6d6d6"></div>
<div class="a" style="left:286px;top:705px;width:92px;height:135px;background:#f2f2f2;border-left:1px solid #d6d6d6;border-radius:6px 0 0 0"></div>
<svg class="a" style="left:298px;top:728px" width="70" height="80" viewBox="0 0 70 80"><path d="M34.5 3.4 C27 3.4 21 8.5 21 18 V30 C21 39.5 25 45.5 29.8 49.5 V55.2 C13 56 3 64.5 2.2 77 H66.8 C66 64.5 56 56 39.2 55.2 V49.5 C44 45.5 48 39.5 48 30 V18 C48 8.5 42 3.4 34.5 3.4 Z" fill="#9a9a9a"/></svg>
<div class="t" style="left:386px;top:717px;color:#222;font-size:14.2px">Số hiệu cán bộ/Mã số nhân viên</div>
<div class="t" style="left:386px;top:748px;color:#222;font-size:14.2px">Mã hồ sơ</div>
<div class="t" style="left:386px;top:779px;color:#222;font-size:14.2px">Họ và tên</div>
<div class="t" style="left:386px;top:810px;color:#222;font-size:14.2px">Ngày sinh</div>
<div class="t" style="left:779px;top:717px;color:#222;font-size:14.2px">Số CCCD</div>
<div class="t" style="left:779px;top:748px;color:#222;font-size:14.2px">Số CMND</div>
<div class="t" style="left:779px;top:779px;color:#222;font-size:14.2px">Ngạch</div>
<div class="t" style="left:779px;top:810px;color:#222;font-size:14.2px">Bậc - Hệ số</div>
<div class="t" style="left:1267px;top:717px;color:#222;font-size:14.2px">Chức vụ</div>
<div class="t" style="left:1267px;top:748px;color:#222;font-size:14.2px">Chức danh</div>
<div class="t" style="left:1267px;top:779px;color:#222;font-size:14.2px">Phòng ban</div>
<div class="a" style="left:1856px;top:891px;width:48px;height:48px;border-radius:50%;border:11px solid #12c97c;background:#fff"></div>
</body></html>
